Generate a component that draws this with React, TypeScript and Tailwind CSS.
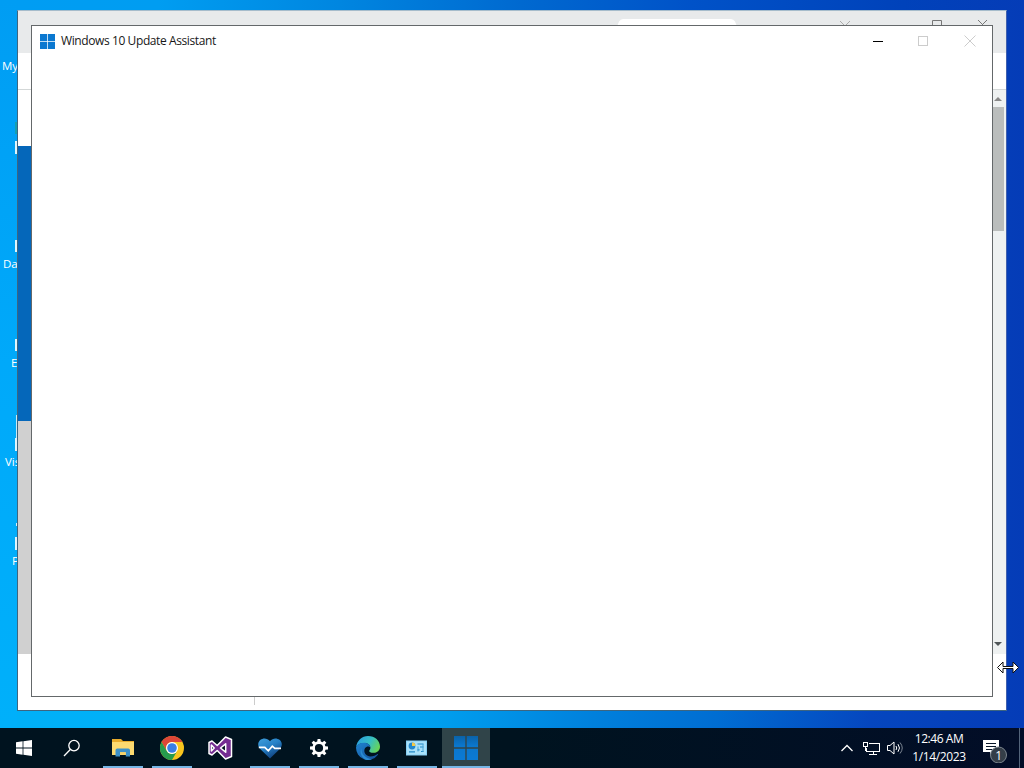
import React from "react";

const desktopLabels = [
  { text: "My", x: 2, y: 59 },
  { text: "Da", x: 3, y: 257 },
  { text: "E", x: 11, y: 356 },
  { text: "Vis", x: 5, y: 455 },
  { text: "P", x: 12, y: 554 },
];
const slivers = [
  { y: 141, h: 13 },
  { y: 240, h: 12 },
  { y: 339, h: 12 },
  { y: 438, h: 13 },
  { y: 537, h: 13 },
];

function WindowsTiles({ size }: { size: number }) {
  return (
    <svg width={size} height={size} viewBox="0 0 24 24" fill="#0b78d0">
      <path d="M0 0h11.4v11.4H0zM12.6 0H24v11.4H12.6zM0 12.6h11.4V24H0zM12.6 12.6H24V24H12.6z" />
    </svg>
  );
}

function TaskTiles() {
  return (
    <svg width="24" height="24" viewBox="0 0 24 24">
      <defs>
        <linearGradient id="tiles" x1="0" y1="0" x2="0" y2="1">
          <stop offset="0" stopColor="#0a62a8" />
          <stop offset=".4" stopColor="#0b76cc" />
          <stop offset="1" stopColor="#0b7ad4" />
        </linearGradient>
      </defs>
      <path d="M0 0h11.300v11.300H0zM12.700 0H24v11.300H12.700zM0 12.700h11.300V24H0zM12.700 12.700H24V24H12.700z" fill="url(#tiles)" />
    </svg>
  );
}

function StartIcon() {
  return (
    <svg width="16" height="16" viewBox="0 0 16 16" fill="#fff">
      <path d="M0 2.3 6.6 1.3v6.3H0zM7.4 1.2 16 0v7.6H7.4zM0 8.4h6.6v6.4L0 13.8zM7.4 8.4H16V16l-8.600-1.200z" />
    </svg>
  );
}

function SearchIcon() {
  return (
    <svg width="18" height="18" viewBox="0 0 18 18" fill="none" stroke="#fff" strokeWidth="1.3">
      <circle cx="11" cy="6.6" r="5.2" />
      <path d="M7.3 10.5 1 17" />
    </svg>
  );
}

function FolderIcon() {
  return (
    <svg width="24" height="20" viewBox="0 0 24 20">
      <path d="M1 1h9l2 2h11v14H1z" fill="#e8ac2c" />
      <path d="M1 4h22v13H1z" fill="#fcda70" />
      <path d="M4.5 18.5v-6.2q0-1.8 1.8-1.8h10.9q1.8 0 1.8 1.8v6.2h-4.2v-4.2H9v4.2z" fill="#3d91c9" />
      <path d="M9 14.3h5.8v2.4H9z" fill="#f7d36a" />
    </svg>
  );
}

function ChromeIcon() {
  return (
    <svg width="24" height="24" viewBox="0 0 24 24">
      <circle cx="12" cy="12" r="12" fill="#f9c51e" />
      <path d="M1.6 6A12 12 0 0 1 22.4 6H12a6 6 0 0 0-5.2 9z" fill="#dc4638" />
      <path d="M1.6 6A12 12 0 0 0 12 24l5.2-9A6 6 0 0 1 6.8 15z" fill="#269b4d" />
      <circle cx="12" cy="12" r="6" fill="#fff" />
      <circle cx="12" cy="12" r="4.8" fill="#397ee5" />
    </svg>
  );
}

function VisualStudioIcon() {
  return (
    <svg width="25" height="24" viewBox="0 0 25 24">
      <path
        fillRule="evenodd"
        d="M1 6.500 4 5l5.200 4.500L17.500 1l6 2.500v17l-6 2.500-8.300-8.500L4 19l-3-1.500zM3.400 9v6l2.800-3zM12.500 12l5.200 4.200V7.800z"
        fill="#742c91"
        stroke="#fff"
        strokeWidth="1.5"
        strokeLinejoin="round"
      />
    </svg>
  );
}

function HealthIcon() {
  return (
    <svg width="24" height="21" viewBox="0 0 24 21">
      <defs>
        <linearGradient id="heart" x1="0" y1="0" x2=".6" y2="1">
          <stop offset="0" stopColor="#3f9fdc" />
          <stop offset=".5" stopColor="#2580c6" />
          <stop offset="1" stopColor="#103f7c" />
        </linearGradient>
      </defs>
      <path d="M12 3.200C9.200-.4 5-.2 2.500 1.800c-3 2.500-3 6.400-.3 9.100l9.800 9.600 9.800-9.600c2.700-2.700 2.700-6.600-.3-9.100C19-.2 14.800-.4 12 3.200z" fill="url(#heart)" />
      <path d="M.8 9.400h6l3.500 3.400 4-4.600 2.500 2.200H23" fill="none" stroke="#fff" strokeWidth="1.7" />
    </svg>
  );
}

function GearIcon() {
  const teeth = [0, 45, 90, 135, 180, 225, 270, 315];
  return (
    <svg width="20" height="20" viewBox="0 0 20 20">
      <circle cx="10" cy="10" r="5.4" fill="none" stroke="#fff" strokeWidth="2.6" />
      {teeth.map((a) => (
        <path key={a} d="M8.200 4 8.600 1h2.800l.4 3z" fill="#fff" transform={`rotate(${a} 10 10)`} />
      ))}
    </svg>
  );
}

function EdgeIcon() {
  return (
    <svg width="24" height="24" viewBox="0 0 24 24">
      <defs>
        <linearGradient id="edgeTop" x1="0" y1=".2" x2="1" y2=".6">
          <stop offset="0" stopColor="#2a9de0" />
          <stop offset=".55" stopColor="#36bfc4" />
          <stop offset="1" stopColor="#68d456" />
        </linearGradient>
        <linearGradient id="edgeLow" x1="0" y1="0" x2="1" y2="1">
          <stop offset="0" stopColor="#1e83d0" />
          <stop offset="1" stopColor="#164e96" />
        </linearGradient>
      </defs>
      <path d="M.1 11C1 4.500 6 0 12 0c7 0 12 4.800 12 10.500 0 4-2.900 6.300-6.400 6.300-3.100 0-4.400-1-4.400-1.900 0-.8 1.200-1.200 1.200-3.200C14.400 8.800 11.700 7 8.400 7 4.700 7 1.500 8.500.1 11z" fill="url(#edgeTop)" />
      <path d="M.1 11C1.200 8.200 4.600 6.800 8.200 6.800c3.700 0 6 2.200 6.200 4.700-1-1.500-4-1.500-5.300.6-2.100 3.400.2 8.300 5.200 8.300 3.300 0 5.500-1.200 6.900-2.200.6-.4 1 .1.700.6A12 12 0 0 1 .1 11z" fill="url(#edgeLow)" />
      <path d="M5.500 12.500c-.4 5.300 3.800 9.800 10.500 10.800-2 .7-4.600.9-7 .1C4.500 20.500 3.500 15 5.500 12.500z" fill="#2a8ad0" />
    </svg>
  );
}

function ControlPanelIcon() {
  return (
    <svg width="21" height="16" viewBox="0 0 21 16">
      <path d="M0 .5h21v15H0z" fill="#87cff3" />
      <path d="M1 1.500h19v13H1z" fill="#a9e1fa" />
      <circle cx="6" cy="6" r="3.400" fill="#2488cd" />
      <path d="M6 6V2.600A3.400 3.400 0 0 1 9.400 6z" fill="#f5c946" />
      <path d="M3 11.800h6M11.500 4h6M14 7h3.500M11.500 9.800h2M15 11.500h2.500" stroke="#2389c7" strokeWidth="1.200" />
      <path d="M12 6.500v5M17 4v8" stroke="#49a5d6" />
    </svg>
  );
}

const apps = [
  { id: "explorer", icon: <FolderIcon /> },
  { id: "chrome", icon: <ChromeIcon /> },
  { id: "studio", icon: <VisualStudioIcon /> },
  { id: "health", icon: <HealthIcon /> },
  { id: "settings", icon: <GearIcon /> },
  { id: "edge", icon: <EdgeIcon /> },
  { id: "panel", icon: <ControlPanelIcon /> },
];

function Taskbar() {
  return (
    <footer className="flex h-10 shrink-0 bg-linear-to-r from-[#00131f] via-[#00131f] to-[#020d27] text-white">
      <div className="flex w-12 items-center justify-center"><StartIcon /></div>
      <div className="flex w-[50px] items-center justify-center pr-[2px]"><SearchIcon /></div>
      {apps.map((app) => (
        <div key={app.id} className="flex w-[49px] flex-col items-center">
          <div className="flex h-[38px] items-center pt-0.5">{app.icon}</div>
          {app.id !== "studio" && <div className="h-0.5 w-10 bg-[#76b5e5]" />}
        </div>
      ))}
      <div className="ml-px flex w-12 flex-col items-center bg-[#304449]">
        <div className="flex h-[38px] items-center pt-0.5"><TaskTiles /></div>
        <div className="h-0.5 w-full bg-[#76b5e5]" />
      </div>
      <div className="ml-auto flex">
        <div className="flex items-center">
          <svg width="12" height="8" viewBox="0 0 12 8" fill="none" stroke="#fff" strokeWidth="1.300"><path d="m.5 7 5.500-5.500L11.500 7" /></svg>
          <svg className="ml-[10px]" width="17" height="15" viewBox="0 0 17 15" fill="none" stroke="#fff" shapeRendering="crispEdges">
            <path d="M6 2.500h10.500v8H3.500v-4M.5 1.500h4v4h-4zM2.500 6v4M10.500 11v3M6 13.500h8" />
          </svg>
          <svg className="ml-[7px]" width="17" height="14" viewBox="0 0 17 14" fill="none" stroke="#fff">
            <path d="M.5 4.500h2.500l4-3.500v12L3 9.500H.5zM9 5q1.500 2 0 4M11 3.200q3 3.800 0 7.600" />
            <path d="M13 1.500q4.500 5.500 0 11" stroke="#7b8591" />
          </svg>
        </div>
        <div className="ml-[4px] flex w-[62px] flex-col items-center pt-0.5 font-['Open_Sans',sans-serif] text-[12px] leading-[18px] tracking-[-0.45px]">
          <span className="whitespace-nowrap">12:46 AM</span>
          <span className="whitespace-nowrap tracking-[-0.35px]">1/14/2023</span>
        </div>
        <div className="flex w-[49px] items-center pt-1 pl-3">
          <svg width="26" height="26" viewBox="0 0 26 26">
            <path d="M1 3h16v12h-6l-3 3v-3H1z" fill="#fff" />
            <path d="M4 6.500h10M4 9.500h10M4 12.500h6" stroke="#09172a" />
            <circle cx="16.500" cy="18" r="8" fill="#343e48" stroke="#7c868f" />
            <text x="13.300" y="22.500" fill="#fff" fontSize="12" fontFamily="Open Sans, sans-serif">1</text>
          </svg>
        </div>
        <div className="w-[5px] border-l border-[#53647a]" />
      </div>
    </footer>
  );
}

function BackWindow() {
  return (
    <section className="absolute top-[10px] left-[17px] flex h-[701px] w-[990px] flex-col overflow-hidden border border-[#3d6580] border-t-[#a6bccb] border-r-[#4060ae] bg-white">
      <div className="flex h-[42px] shrink-0 bg-[#e8eaeb]">
        <svg width="988" height="42" viewBox="0 0 988 42" fill="none" stroke="#777">
          <path d="M599 18q1-10 6-10h108q5 0 6 10z" fill="#fff" stroke="none" />
          <path d="m822 10 5 5 5-5" stroke="#aaa" />
          <path d="M867 14.500h14" stroke="#999" />
          <path d="M914.500 9.500h9v9h-9zM960 9l9 9M969 9l-9 9" />
        </svg>
      </div>
      <div className="h-[37px] shrink-0 border-b border-[#d3d7d7]" />
      <div className="flex h-[564px] shrink-0">
        <div className="flex w-4 flex-col">
          <div className="h-[56px]" />
          <div className="h-[275px] bg-[#0567ba]" />
          <div className="grow bg-[#d0d0d0]" />
        </div>
        <div className="ml-auto flex w-[17px] flex-col items-center bg-[#eef1f1]">
          <div className="flex h-[17px] items-center"><svg width="8" height="4"><path d="m0 4 4-4 4 4z" fill="#888" /></svg></div>
          <div className="h-[124px] w-full border-r-2 border-[#eef1f1] bg-[#babdbc]" />
          <div className="mt-auto flex h-5 items-center"><svg width="8" height="4"><path d="m0 0 4 4 4-4z" fill="#505658" /></svg></div>
        </div>
      </div>
      <div className="mb-[5px] ml-[236px] w-px grow border-l border-[#ccc]" />
    </section>
  );
}

function AssistantWindow() {
  return (
    <main className="absolute top-[25px] left-[31px] h-[672px] w-[962px] border border-[#64686a] bg-white">
      <header className="flex h-[30px] items-center pl-2">
        <WindowsTiles size={15} />
        <h1 className="ml-1.5 font-['Open_Sans',sans-serif] text-[12px] tracking-[-0.4px] text-[#171717]">Windows 10 Update Assistant</h1>
        <div className="ml-auto flex items-center pr-4">
          <svg width="11" height="11"><path d="M0 5.500h10" stroke="#000" shapeRendering="crispEdges" /></svg>
          <svg className="ml-[34px]" width="11" height="11" fill="none" stroke="#ccc" shapeRendering="crispEdges"><path d="M.5.5h9v9h-9z" /></svg>
          <svg className="ml-[35px]" width="12" height="12" stroke="#ccc"><path d="m.5.5 11 11M11.500.5l-11 11" /></svg>
        </div>
      </header>
    </main>
  );
}

export default function App() {
  return (
    <div className="flex h-[768px] w-[1024px] flex-col overflow-hidden">
      <div className="relative flex h-[728px] shrink-0 bg-[linear-gradient(90deg,#00b0f8_0%,#00b0f6_30%,#009ced_44%,#0080dc_58%,#006dd2_70%,#0546bf_85%,#053cb7_100%)]">
        <div className="h-full w-[17px] bg-linear-to-b from-[#009df3] via-[#00a9fa] to-[#00b0fa]" />
        <div className="h-[10px] grow bg-[linear-gradient(90deg,#009df3_0%,#009df1_14%,#0086e0_32%,#0069d0_50%,#0052c8_67%,#0042ba_88%,#053cb7_100%)]" />
        {desktopLabels.map((item) => (
          <span key={item.text} className="absolute font-['Open_Sans',sans-serif] text-[11.5px] leading-[14px] text-white" style={{ left: item.x, top: item.y }}>
            {item.text}
          </span>
        ))}
        {slivers.map((item) => (
          <span key={item.y} className="absolute left-[15px] w-0.5 bg-[#e0f5fc]" style={{ top: item.y, height: item.h }} />
        ))}
        <span className="absolute top-[122px] left-[15px] h-3 w-0.5 bg-[#179fae]" />
        <span className="absolute top-[415px] left-4 h-[23px] w-px bg-[#c8eaf6]" />
        <span className="absolute top-[523px] left-4 h-[3px] w-px bg-[#d8f0fa]" />
        <BackWindow />
        <AssistantWindow />
        <svg className="absolute top-[661px] left-[997px]" width="22" height="13" viewBox="0 0 22 13">
          <path d="M.5 6.500 6 1v4.500h10V1l5.500 5.500L16 12V7.500H6V12z" fill="#fff" stroke="#111" />
        </svg>
      </div>
      <Taskbar />
    </div>
  );
}
